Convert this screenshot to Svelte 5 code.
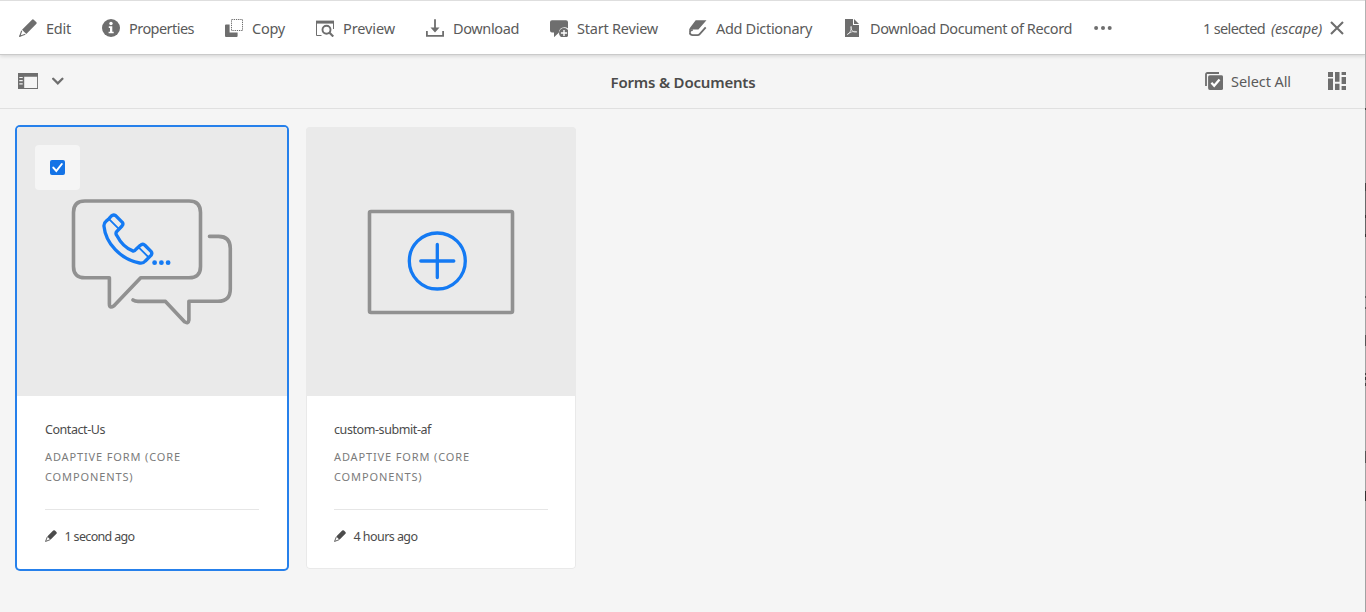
<script>
  const actions = [
    { icon: 'edit', label: 'Edit', width: 25 },
    { icon: 'info', label: 'Properties', width: 65 },
    { icon: 'copy', label: 'Copy', width: 33 },
    { icon: 'preview', label: 'Preview', width: 52 },
    { icon: 'download', label: 'Download', width: 66 },
    { icon: 'review', label: 'Start Review', width: 81 },
    { icon: 'dictionary', label: 'Add Dictionary', width: 96 },
    { icon: 'pdf', label: 'Download Document of Record', width: 202 }
  ];
  const cards = [
    { title: 'Contact-Us', titleWidth: 60, time: '1 second ago', timeWidth: 70, selected: true },
    { title: 'custom-submit-af', titleWidth: 97, time: '4 hours ago', timeWidth: 64, selected: false }
  ];
  const lines = [
    { text: 'ADAPTIVE FORM (CORE', width: 136 },
    { text: 'COMPONENTS)', width: 88.5 }
  ];

  // Tracks a label so that it fills the given width.
  function fit(node, width) {
    const natural = node.getBoundingClientRect().width;
    const count = node.textContent.length;
    node.style.letterSpacing = `${(width - natural) / count}px`;
  }
</script>

{#snippet icon(name)}
  <svg class="icon" viewBox="0 0 18 18" aria-hidden="true">
    {#if name === 'edit'}
      <path d="M3 10.7 12.8.9q1.1-1.1 2.2 0l2.2 2.2q1 1 0 2L7.3 15z" />
      <path d="M2.7 11.7.8 17.2l5.5-1.9" fill="none" stroke="currentColor" stroke-width="1.1" />
      <path d="m.3 17.7.8-2.5 1.7 1.7z" />
    {:else if name === 'pencil'}
      <path d="M3.4 9.7 12.3.9q1.3-1.2 2.6 0l2.2 2.2q1.2 1.2 0 2.5L8.2 14.5z" />
      <path d="M3.4 10.5.8 17.2l6.7-2.6" fill="none" stroke="currentColor" stroke-width="1.3" />
    {:else if name === 'info'}
      <circle cx="9" cy="9" r="9" />
      <circle cx="9" cy="4.5" r="1.7" fill="#fff" />
      <path d="M6.8 7.3h3.5v5.4h1.4v1.6H6.6v-1.6H8V8.9H6.8z" fill="#fff" />
    {:else if name === 'copy'}
      <path d="M0 6.5q0-1 1-1h3.6v8h8V17q0 1-1 1H1q-1 0-1-1z" />
      <rect x="6.5" y=".5" width="11" height="11" fill="none" stroke="currentColor" stroke-dasharray="1.3 .9" />
    {:else if name === 'preview'}
      <path d="M0 1.6h18v3H0z" />
      <path d="M.5 4v12.5h5M17.5 4v6" fill="none" stroke="currentColor" />
      <circle cx="10.5" cy="10.7" r="4" fill="none" stroke="currentColor" stroke-width="1.9" />
      <path d="m13.3 13.5 4 4" stroke="currentColor" stroke-width="2.2" />
    {:else if name === 'download'}
      <path d="M8.1.2h1.8v8.3h3.6L9 13.4 4.5 8.5h3.6z" />
      <path d="M.9 12v4.8h16.2V12" fill="none" stroke="currentColor" stroke-width="1.8" />
    {:else if name === 'review'}
      <path d="M2 1.2h14q2 0 2 2v6.2a5.8 5.8 0 0 0-9.2 4.4L4 18.2v-4.6H2q-2 0-2-2V3.2q0-2 2-2z" />
      <circle cx="14" cy="14" r="5" />
      <path d="M14 10.9v6.2M10.9 14h6.2" stroke="#fff" stroke-width="1.4" />
    {:else if name === 'dictionary'}
      <path d="M6.7 1.2h10.8L9.4 10.6H3.1Q1 10.5 0 12.3q-.1-2 1.2-3.8z" />
      <path d="M.8 13.4q.2-2.4 3-2.2M.8 13.4q.1 2.7 2.9 2.7h4.8q1.4 0 2.4-1.2l5.8-6.6" fill="none" stroke="currentColor" stroke-width="1.8" />
    {:else if name === 'pdf'}
      <path d="M2 0h8v6h6v12H2z" />
      <path d="M11 0v5h5z" />
      <path d="M4.3 15.5c2.7-1.2 4.5-5 3.8-8.1-.6 3.5 2.1 6.7 5.7 5.5-2.2-1.3-6.1-.2-9.5 2.6" fill="none" stroke="#fff" stroke-width=".7" />
    {:else if name === 'more'}
      <circle cx="2.1" cy="9" r="2" /><circle cx="9" cy="9" r="2" /><circle cx="15.7" cy="9" r="2" />
    {:else if name === 'select'}
      <path d="M1 14V2.5Q1 1 2.5 1H14" fill="none" stroke="currentColor" stroke-width="1.8" />
      <rect x="3.1" y="3.2" width="15" height="14.8" rx="1.7" />
      <path d="m6.4 10.7 2.8 3 5.3-6.1" fill="none" stroke="#fff" stroke-width="2.3" />
    {:else if name === 'view'}
      <path d="M0 0h5v5H0zM0 6.5h5V18H0zM7 0h4.5v9.7H7zM7 11.7h4.5V18H7zM13.6 0H18v3h-4.4zM13.6 5H18v7h-4.4zM13.6 14H18v4h-4.4z" />
    {/if}
  </svg>
{/snippet}

<div class="page">
  <header class="actionbar">
    <div class="actions">
      {#each actions as action}
        <button>
          {@render icon(action.icon)}
          <span class="slot" style:width="{action.width}px"><span use:fit={action.width}>{action.label}</span></span>
        </button>
      {/each}
      <button class="more" aria-label="More">{@render icon('more')}</button>
    </div>
    <div class="selection">
      <span class="slot count"><span use:fit={62}>1 selected</span></span>
      <span class="slot escape"><em use:fit={51}>(escape)</em></span>
      <svg class="close" viewBox="0 0 14 14"><path d="m1 1 12 12M13 1 1 13" stroke="currentColor" stroke-width="2.1" /></svg>
    </div>
  </header>

  <nav class="titlebar">
    <div class="rail">
      <svg class="railicon" viewBox="0 0 20 16">
        <path d="M0 0h20v16H0zM6.2 3.7v11.4h12.9V3.7z" fill-rule="evenodd" />
        <path d="M1.3 4.5h3.4M1.3 7.7h3.4M1.3 10.9h3.4" stroke="#f4f4f4" stroke-width="1.2" />
      </svg>
      <svg class="chevron" viewBox="0 0 12 8"><path d="m1.2 1.7 4.6 4.6 4.6-4.6" fill="none" stroke="currentColor" stroke-width="2.3" stroke-linecap="round" /></svg>
    </div>
    <h1><span use:fit={145}>Forms &amp; Documents</span></h1>
    <div class="tools">
      {@render icon('select')}
      <span class="slot all"><span use:fit={60}>Select All</span></span>
      <span class="viewswitch">{@render icon('view')}</span>
    </div>
  </nav>

  <main>
    {#each cards as card}
      <article class:selected={card.selected}>
        <div class="thumb">
          {#if card.selected}
            <svg class="art" viewBox="17 127 270 269">
              <g fill="none" stroke="#919191" stroke-width="3.6" stroke-linecap="round" stroke-linejoin="round">
                <path d="M109.4 277.8H85Q73.5 277.8 73.5 266.5V212.5Q73.5 201 85 201H189Q200.5 201 200.5 212.5V266.5Q200.5 277.8 189 277.8H140.7L114 305.7Q109.4 309 109.4 304Z" />
                <path d="M209.5 236.4H218.5Q230.3 236.4 230.3 248.5V289Q230.3 301.3 218 301.3H188.9V320Q188.4 324.2 184.5 321.8L165.5 301.4H138Q135 301.4 133 300" />
              </g>
              <g transform="translate(10 115) scale(.33333)" fill="none" stroke="#147af3" stroke-width="10" stroke-linejoin="round">
                <path d="M297 311 304 303Q310 297 317 302L337 322Q341 327 336 333L320 350Q316 355 320 361C331 382 345 399 367 407Q373 410 378 403L391 391Q397 385 404 390L423 409Q428 415 423 421L406 438Q399 446 389 444C332 433 287 385 282 334Q281 324 288 319Z" />
                <path d="m298 313 27 27M386 397l29 29" stroke-width="5.5" />
              </g>
              <g fill="#147af3"><circle cx="154.6" cy="262.7" r="2.4" /><circle cx="161.4" cy="262.7" r="2.4" /><circle cx="168.1" cy="262.7" r="2.4" /></g>
            </svg>
            <span class="check">
              <svg viewBox="0 0 15 15"><rect width="15" height="15" rx="2" fill="#1473e6" /><path d="m3.3 7.6 3 3.4 5.5-7" fill="none" stroke="#fff" stroke-width="2" stroke-linecap="round" /></svg>
            </span>
          {:else}
            <svg class="art" viewBox="306 127 270 269">
              <rect x="369.5" y="211.5" width="143" height="101" rx="1.5" fill="none" stroke="#919191" stroke-width="3.6" />
              <g fill="none" stroke="#147af3" stroke-width="3.3" stroke-linecap="round">
                <circle cx="437.3" cy="261" r="28" />
                <path d="M437.3 244.5v33M420.8 261h33" />
              </g>
            </svg>
          {/if}
        </div>
        <div class="details">
          <h2><span use:fit={card.titleWidth}>{card.title}</span></h2>
          <div class="kind">
            {#each lines as line}
              <div><span use:fit={line.width}>{line.text}</span></div>
            {/each}
          </div>
          <hr />
          <div class="modified">
            {@render icon('pencil')}
            <span use:fit={card.timeWidth}>{card.time}</span>
          </div>
        </div>
      </article>
    {/each}
  </main>
  <div class="edge"></div>
</div>

<style>
  :global(body) { margin: 0; background: #f5f5f5; }
  .page {
    position: relative;
    height: 612px;
    box-sizing: border-box;
    overflow: hidden;
    background: #f5f5f5;
    color: #4b4b4b;
    font: 400 14.5px/20px 'Noto Sans', 'Open Sans', sans-serif;
  }
  .icon { width: 18px; height: 18px; flex: none; display: block; fill: currentColor; color: #6e6e6e; }
  .slot { display: block; color: #5a5a5a; }
  span, em { white-space: nowrap; }
  .actionbar {
    position: relative;
    display: flex;
    justify-content: space-between;
    align-items: center;
    height: 55px;
    box-sizing: border-box;
    padding: 1px 22px 0 19px;
    border-top: 1px solid #dedede;
    border-bottom: 1px solid #cacaca;
    background: #fff;
    box-shadow: 0 1px 4px rgba(0, 0, 0, .15);
  }
  .actions { display: flex; gap: 31px; }
  button {
    display: flex;
    align-items: center;
    gap: 9px;
    padding: 0;
    border: 0;
    background: none;
    color: inherit;
    font: inherit;
  }
  .more { margin-left: -9px; }
  .selection { display: flex; align-items: center; }
  .count { width: 68px; }
  .escape { width: 59px; }
  .close { width: 14px; height: 14px; color: #6e6e6e; }
  .titlebar {
    display: grid;
    grid-template-columns: 1fr auto 1fr;
    align-items: center;
    height: 54px;
    box-sizing: border-box;
    padding: 0 20px 2px 18px;
    border-bottom: 1px solid #e0e0e0;
  }
  .rail { display: flex; align-items: center; gap: 14px; color: #6e6e6e; }
  .railicon { width: 20px; height: 16px; fill: currentColor; }
  .chevron { width: 12px; height: 8px; }
  h1 { width: 145px; margin: 2px 0 0 2px; font-size: 15px; line-height: 20px; font-weight: 600; }
  .tools { display: flex; align-items: center; justify-content: flex-end; }
  .all { width: 60px; margin: 0 37px 0 8px; }
  main { display: flex; gap: 19px; padding: 18px 17px; }
  article {
    width: 270px;
    height: 442px;
    box-sizing: border-box;
    overflow: hidden;
    border-radius: 4px;
    background: #fff;
    box-shadow: inset 0 0 0 1px #e9e9e9;
  }
  article.selected { border-radius: 3px; box-shadow: 0 0 0 2px #2680eb; }
  .thumb { position: relative; height: 269px; background: #eaeaea; }
  .art { display: block; width: 270px; height: 269px; }
  .check {
    position: absolute;
    left: 18px;
    top: 18px;
    width: 45px;
    height: 45px;
    display: grid;
    place-items: center;
    border-radius: 4px;
    background: #f5f5f5;
  }
  .check svg { width: 15px; height: 15px; }
  .details { padding: 24px 28px 0; font-size: 12.5px; }
  h2 { margin: 0; font-size: 12.5px; line-height: 20px; font-weight: 400; }
  .kind { margin-top: 7px; color: #7b7b7b; font-size: 11px; line-height: 20px; }
  hr { height: 1px; margin: 22px 0 17px; border: 0; background: #e6e6e6; }
  .modified { display: flex; align-items: center; gap: 7.5px; }
  .modified :global(.icon) { width: 12px; height: 12px; margin-top: -2px; color: #4b4b4b; }
  .edge {
    position: absolute;
    right: 0;
    top: 0;
    width: 1px;
    height: 612px;
    background: linear-gradient(
      #b2b2b2 108px, #444 108px 110px, #a2a2a2 110px 183px, #444 183px 191px,
      #6a6a6a 191px 215px, #333 215px 218px, #666 218px 234px, #333 234px 237px,
      #a2a2a2 237px 296px, #555 296px 298px, #a2a2a2 298px 307px, #555 307px 309px,
      #a2a2a2 309px 335px, #555 335px 346px, #a2a2a2 346px 373px, #444 373px 375px,
      #a2a2a2 375px 377px, #333 377px 380px, #999 380px 383px, #444 383px 386px,
      #a2a2a2 386px 451px, #555 451px 463px, #a2a2a2 463px 491px, #333 491px 501px, #a2a2a2 501px
    );
  }
</style>
